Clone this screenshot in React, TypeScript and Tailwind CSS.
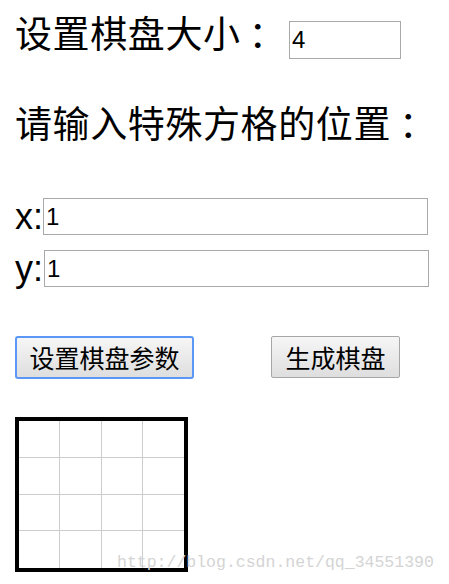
import React from "react";

const cjk = { fontFamily: '"Noto Sans CJK SC", "Noto Sans", sans-serif' };

export default function App() {
  return (
    <div className="relative w-[449px] h-[584px] bg-white text-black overflow-hidden pl-[15px]" style={cjk}>
      <div className="flex items-start pt-[10px] h-[100px]">
        <span className="w-[274px] shrink-0 whitespace-nowrap text-[37px] tracking-[0.6px] leading-[44px]">
          设置棋盘大小<span className="inline-block w-[30px] pl-[8px]">：</span>
        </span>
        <input
          defaultValue="4"
          className="mt-[11px] w-[112px] h-[38px] border border-[#a9a9a9] px-[2px] text-[24px] text-black outline-none"
          style={{ fontFamily: '"Liberation Sans", Arial, sans-serif' }}
        />
      </div>
      <div className="whitespace-nowrap text-[37px] tracking-[0.6px] leading-[44px] h-[98px]">
        请输入特殊方格的位置<span className="inline-block w-[30px] pl-[8px]">：</span>
      </div>
      <div className="flex flex-col gap-[15px]" style={{ fontFamily: '"Liberation Sans", Arial, sans-serif' }}>
        <div className="flex items-end h-[37px]">
          <span className="text-[36px] leading-[37px] w-[28px]">x:</span>
          <input
            defaultValue="1"
            className="w-[385px] h-[37px] border border-[#a9a9a9] px-[2px] text-[24px] text-black outline-none"
          />
        </div>
        <div className="flex items-end h-[37px]">
          <span className="text-[36px] leading-[37px] w-[29px]">y:</span>
          <input
            defaultValue="1"
            className="w-[385px] h-[37px] border border-[#a9a9a9] px-[2px] text-[24px] text-black outline-none"
          />
        </div>
      </div>
      <div className="flex items-start mt-[49px] gap-[77px]">
        <button className="w-[179px] h-[43px] rounded-[3px] border-2 border-[#5b97f7] bg-gradient-to-b from-[#f6f6f6] to-[#dedede] text-[25px] leading-none">
          设置棋盘参数
        </button>
        <button className="w-[129px] h-[42px] rounded-[2px] border border-[#a6a6a6] bg-gradient-to-b from-[#f6f6f6] to-[#dedede] text-[25px] leading-none">
          生成棋盘
        </button>
      </div>
      <div className="mt-[38px] w-[173px] h-[155px] border-4 border-black grid grid-cols-4 grid-rows-4">
        {Array.from({ length: 16 }).map((_, i) => (
          <div
            key={i}
            className={
              "border-[#cccccc] " +
              (i % 4 !== 3 ? "border-r " : "") +
              (i < 12 ? "border-b" : "")
            }
          />
        ))}
      </div>
      <div
        className="absolute left-[117px] top-[553px] text-[16.5px] leading-[20px] text-[#d4d4d4]"
        style={{ fontFamily: '"Liberation Mono", "DejaVu Sans Mono", monospace' }}
      >
        http://blog.csdn.net/qq_34551390
      </div>
    </div>
  );
}
